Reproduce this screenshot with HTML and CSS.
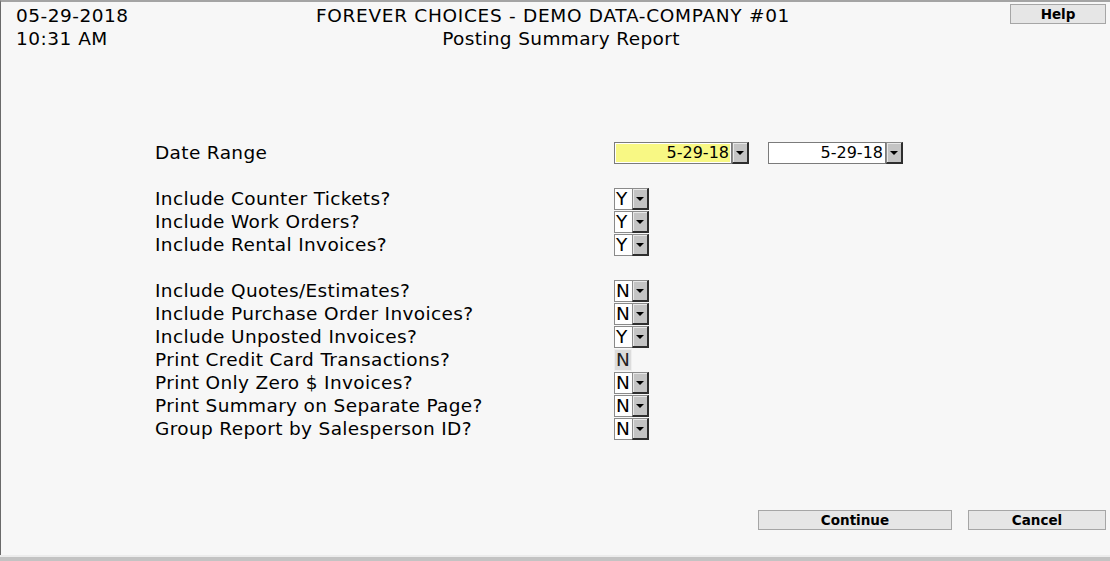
FILE: index.html
```html
<!DOCTYPE html>
<html>
<head>
<meta charset="utf-8">
<title>Posting Summary Report</title>
<link rel="stylesheet" href="styles.css">
</head>
<body>
<div class="frame">
  <header class="top">
    <div class="stamp">
      <div>05-29-2018</div>
      <div>10:31 AM</div>
    </div>
    <div class="title">
      <div class="company">FOREVER CHOICES - DEMO DATA-COMPANY #01</div>
      <div class="report">Posting Summary Report</div>
    </div>
    <div class="help-wrap">
      <button class="btn help" type="button">Help</button>
    </div>
  </header>

  <form class="form">
    <div class="group">
      <div class="label">Date Range</div>
      <div class="controls dates">
        <span class="combo"><span class="datebox current">5-29-18</span><span class="arrow"></span></span>
        <span class="combo"><span class="datebox">5-29-18</span><span class="arrow"></span></span>
      </div>
    </div>

    <div class="group">
      <div class="label">Include Counter Tickets?</div>
      <div class="controls"><span class="combo"><span class="yn">Y</span><span class="arrow"></span></span></div>
      <div class="label">Include Work Orders?</div>
      <div class="controls"><span class="combo"><span class="yn">Y</span><span class="arrow"></span></span></div>
      <div class="label">Include Rental Invoices?</div>
      <div class="controls"><span class="combo"><span class="yn">Y</span><span class="arrow"></span></span></div>
    </div>

    <div class="group">
      <div class="label">Include Quotes/Estimates?</div>
      <div class="controls"><span class="combo"><span class="yn">N</span><span class="arrow"></span></span></div>
      <div class="label">Include Purchase Order Invoices?</div>
      <div class="controls"><span class="combo"><span class="yn">N</span><span class="arrow"></span></span></div>
      <div class="label">Include Unposted Invoices?</div>
      <div class="controls"><span class="combo"><span class="yn">Y</span><span class="arrow"></span></span></div>
      <div class="label">Print Credit Card Transactions?</div>
      <div class="controls"><span class="combo"><span class="yn disabled">N</span></span></div>
      <div class="label">Print Only Zero $ Invoices?</div>
      <div class="controls"><span class="combo"><span class="yn">N</span><span class="arrow"></span></span></div>
      <div class="label">Print Summary on Separate Page?</div>
      <div class="controls"><span class="combo"><span class="yn">N</span><span class="arrow"></span></span></div>
      <div class="label">Group Report by Salesperson ID?</div>
      <div class="controls"><span class="combo"><span class="yn">N</span><span class="arrow"></span></span></div>
    </div>
  </form>

  <div class="actions">
    <button class="btn continue" type="button">Continue</button>
    <button class="btn cancel" type="button">Cancel</button>
  </div>
</div>
<div class="bottom-bar"></div>
</body>
</html>
```

FILE: styles.css
```css
html, body {
  margin: 0;
  padding: 0;
}
body {
  width: 1110px;
  height: 561px;
  overflow: hidden;
  background: #c3c3c3;
  font-family: "DejaVu Sans", Verdana, sans-serif;
  font-size: 18.5px;
  color: #000;
}
.frame {
  box-sizing: border-box;
  height: 555px;
  border-top: 2px solid #a4a4a4;
  border-left: 1px solid #6a6a6a;
  background: #f7f7f7;
  display: flex;
  flex-direction: column;
}
.bottom-bar {
  height: 2px;
  background: #ececec;
}
.top {
  display: grid;
  grid-template-columns: 1fr auto 1fr;
  padding: 2px 4px 0 15px;
  line-height: 23px;
}
.stamp {
  letter-spacing: 0.5px;
}
.title {
  text-align: center;
}
.company {
  letter-spacing: 0.7px;
  padding-right: 16px;
}
.report {
  letter-spacing: 0.36px;
}
.help-wrap {
  display: flex;
  justify-content: flex-end;
  align-items: flex-start;
}
.btn {
  font-family: "DejaVu Sans", Verdana, sans-serif;
  font-weight: bold;
  font-size: 13.5px;
  color: #000;
  background: #e6e6e6;
  border: 1px solid #a6a6a6;
  height: 20px;
  padding: 0;
  line-height: 18px;
}
.help {
  width: 96px;
}
.form {
  margin-top: 91px;
  padding-left: 154px;
}
.group {
  display: grid;
  grid-template-columns: 459px auto;
  grid-auto-rows: 23px;
  margin-bottom: 23px;
}
.label {
  line-height: 23px;
  white-space: nowrap;
  letter-spacing: 0.35px;
}
.controls {
  display: flex;
  align-items: center;
  height: 23px;
}
.dates {
  gap: 19px;
}
.combo {
  display: flex;
  height: 22px;
}
.datebox {
  box-sizing: border-box;
  width: 118px;
  height: 22px;
  border: 1px solid #7b7b7b;
  box-shadow: inset 0 0 0 1px #fff;
  background: #fff;
  text-align: right;
  padding-right: 2px;
  font-size: 16px;
  line-height: 20px;
}
.datebox.current {
  background: #f8f884;
}
.yn {
  box-sizing: border-box;
  width: 18px;
  height: 22px;
  border: 1px solid #8a8a8a;
  border-right: none;
  background: #fff;
  padding-left: 1px;
  line-height: 20px;
}
.yn.disabled {
  background: #dcdcdc;
  border: 1px solid #eeeeee;
  color: #222;
}
.arrow {
  box-sizing: border-box;
  width: 17px;
  height: 22px;
  background: #c4c4c4;
  border-top: 1px solid #8c8c8c;
  border-left: 1px solid #8c8c8c;
  border-right: 2px solid #2e2e2e;
  border-bottom: 2px solid #2e2e2e;
  box-shadow: inset 1px 1px 0 #e8e8e8;
  display: flex;
  align-items: center;
  justify-content: center;
}
.arrow::after {
  content: "";
  width: 0;
  height: 0;
  border-left: 4px solid transparent;
  border-right: 4px solid transparent;
  border-top: 4px solid #000;
  margin-top: 1px;
}
.actions {
  margin-top: auto;
  display: flex;
  justify-content: flex-end;
  gap: 16px;
  padding: 0 4px 25px 0;
}
.continue {
  width: 194px;
}
.cancel {
  width: 138px;
}
```
